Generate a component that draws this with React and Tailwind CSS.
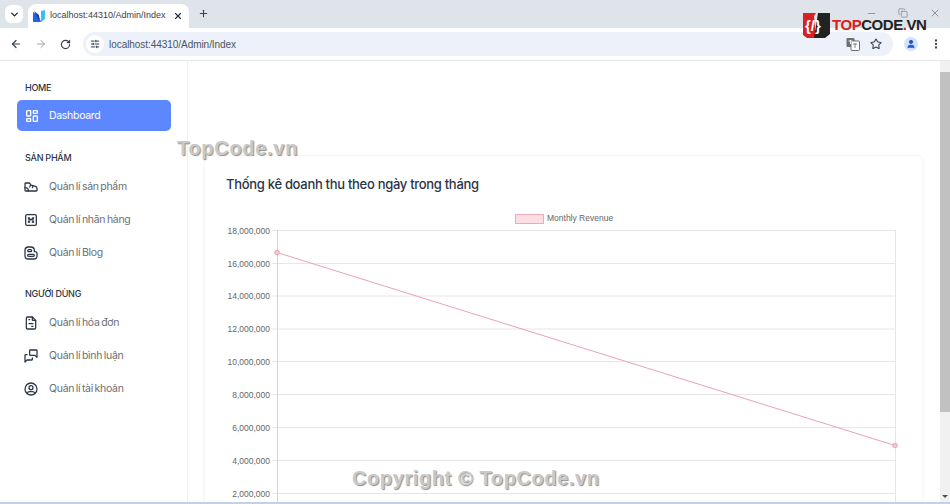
import React from "react";
import { ArrowLeft, ArrowRight, RotateCw, ChevronDown, Plus, X, Star, SlidersHorizontal, User, MoreVertical, Minus, Copy } from "lucide-react";
import { TbLayoutDashboard, TbShoe, TbBrandMedium, TbBrandBlogger, TbFileInvoice, TbMessages, TbUserCircle } from "react-icons/tb";

const jakarta = "font-['Inter','Noto_Sans',sans-serif]";

const SectionTitle = ({ children, className }) => (
  <div className={`pl-[25px] text-[9px] font-medium leading-[14px] tracking-[-0.25px] text-[#2a3547] ${className}`}>{children}</div>
);

const NavItem = ({ icon: Icon, label }) => (
  <div className="flex h-[33px] items-center pl-[23px]">
    <Icon size={16} className="text-[#2a3547]" strokeWidth={1.9} />
    <span className="ml-[10px] text-[10.5px] tracking-[-0.3px] [word-spacing:-1px] text-[#6b7076]">{label}</span>
  </div>
);

const ticks = [
  ["18,000,000", 230.5],
  ["16,000,000", 263.5],
  ["14,000,000", 296],
  ["12,000,000", 329],
  ["10,000,000", 361.5],
  ["8,000,000", 394.5],
  ["6,000,000", 427.5],
  ["4,000,000", 460.5],
  ["2,000,000", 493.5],
];

const Chart = () => (
  <svg width="730" height="300" viewBox="205 204 730 300" className="block">
    <rect x="515.5" y="214.5" width="28" height="9" fill="#fbdde4" stroke="#eeaab8" />
    <text x="547" y="221" fontSize="8.5" fill="#666" fontFamily="Liberation Sans, sans-serif">Monthly Revenue</text>
    {ticks.map(([label, y]) => (
      <g key={label}>
        <line x1="272" x2="895" y1={y} y2={y} stroke="#e6e6e6" />
        <text x="270" y={y + 3} fontSize="8.5" textAnchor="end" fill="#666" fontFamily="Liberation Sans, sans-serif">{label}</text>
      </g>
    ))}
    <line x1="277.5" x2="277.5" y1="230" y2="504" stroke="#d4d4d4" />
    <line x1="895.5" x2="895.5" y1="230" y2="504" stroke="#e6e6e6" />
    <line x1="277" y1="252.5" x2="895" y2="445.5" stroke="#e8a3b2" strokeWidth="1" />
    <circle cx="277" cy="252.5" r="2.3" fill="#fbc4d0" stroke="#e8a3b2" />
    <circle cx="895" cy="445.5" r="2.3" fill="#fbc4d0" stroke="#e8a3b2" />
  </svg>
);

const TranslateIcon = () => (
  <svg width="14" height="14" viewBox="0 0 14 14" className="ml-auto">
    <rect x="0.5" y="1" width="8" height="9" rx="1" fill="#6b7075" />
    <rect x="5" y="4" width="8.5" height="9.5" rx="1" fill="#fff" stroke="#6b7075" />
    <path d="M2.5 4 H6.5 M4.5 3 V7 M7 7 H11 M9 8 V11" stroke="#fff" strokeWidth="0.9" />
    <path d="M7 7 H11 M9 6.5 V11" stroke="#6b7075" strokeWidth="0.9" />
  </svg>
);

const App = () => (
  <div className={`relative flex h-screen w-full flex-col overflow-hidden bg-white ${jakarta}`}>
    {/* tab strip */}
    <div className="flex h-[28px] shrink-0 items-end bg-[#dfe3ea] pl-[5px]">
      <div className="mb-[5px] flex h-[18px] w-[18px] items-center justify-center rounded-[6px] bg-white">
        <ChevronDown size={11} strokeWidth={3} className="text-[#1f2937]" />
      </div>
      <div className="ml-[5px] flex h-[24px] w-[161px] items-center rounded-t-[8px] bg-white pl-[5px]">
        <svg width="12" height="12" viewBox="0 0 12 12">
          <path d="M0 2 L6 6 L8 12 L0 12 Z" fill="#2563eb" />
          <path d="M1 1 L6 5 L6 11 Z" fill="#1e40af" />
          <path d="M8 1 L12 0 L12 9 L8 12 Z" fill="#38bdf8" />
        </svg>
        <span className="ml-[5px] w-[117px] font-['Liberation_Sans',sans-serif] text-[9px] whitespace-nowrap text-[#3c4043]">localhost:44310/Admin/Index</span>
        <X size={10} strokeWidth={2.6} className="ml-[6px] text-[#1f2937]" />
      </div>
      <Plus size={11} strokeWidth={2.4} className="mb-[9px] ml-[9px] text-[#374151]" />
      <div className="ml-auto mb-[9px] flex items-center gap-[21px] pr-[9px] text-[#8b929c]">
        <Minus size={11} />
        <Copy size={10} />
        <X size={12} />
      </div>
    </div>

    {/* toolbar */}
    <div className="flex h-[33px] shrink-0 items-center border-b border-[#e4e6ea] bg-white">
      <ArrowLeft size={12} strokeWidth={2.4} className="ml-[10px] text-[#374151]" />
      <ArrowRight size={12} strokeWidth={2} className="ml-[13px] text-[#9ca3af]" />
      <RotateCw size={11} strokeWidth={2.4} className="ml-[13px] text-[#374151]" />
      <div className="ml-[12px] flex h-[24px] w-[810px] items-center rounded-full bg-[#edf1f9]">
        <div className="ml-[3px] flex h-[18px] w-[18px] items-center justify-center rounded-full bg-white">
          <SlidersHorizontal size={10} strokeWidth={2.4} className="text-[#374151]" />
        </div>
        <span className="ml-[5px] font-['Liberation_Sans',sans-serif] text-[10px] tracking-[-0.05px] text-[#4b5563]">localhost:44310/Admin/Index</span>
        <TranslateIcon />
        <Star size={12} strokeWidth={2.2} className="ml-[10px] mr-[11px] text-[#374151]" />
      </div>
      <div className="ml-[11px] flex h-[14px] w-[14px] items-center justify-center rounded-full bg-[#d3e3fd]">
        <User size={10} fill="#1a56c4" className="text-[#1a56c4]" />
      </div>
      <MoreVertical size={12} strokeWidth={2.6} className="ml-[12px] text-[#374151]" />
    </div>

    {/* page */}
    <div className="flex min-h-0 flex-1">
      <aside className="w-[188px] shrink-0 border-r border-[#eceff3] pt-[20px]">
        <SectionTitle>HOME</SectionTitle>
        <div className="ml-[17px] mt-[5px] flex h-[31px] w-[154px] items-center rounded-[5px] bg-[#5d87ff] pl-[7px] text-white">
          <TbLayoutDashboard size={16} />
          <span className="ml-[9px] text-[10.5px] tracking-[-0.3px]">Dashboard</span>
        </div>
        <SectionTitle className="mt-[20px]">SẢN PHẨM</SectionTitle>
        <div className="mt-[5px]">
          <NavItem icon={TbShoe} label="Quản lí sản phẩm" />
          <NavItem icon={TbBrandMedium} label="Quản lí nhãn hàng" />
          <NavItem icon={TbBrandBlogger} label="Quản lí Blog" />
        </div>
        <SectionTitle className="mt-[18px]">NGƯỜI DÙNG</SectionTitle>
        <div className="mt-[5px]">
          <NavItem icon={TbFileInvoice} label="Quản lí hóa đơn" />
          <NavItem icon={TbMessages} label="Quản lí bình luận" />
          <NavItem icon={TbUserCircle} label="Quản lí tài khoản" />
        </div>
      </aside>

      <main className="min-w-0 flex-1 overflow-hidden pl-[16px] pr-[18px] pt-[94px]">
        <div className="h-[400px] w-[719px] rounded-t-[6px] border border-[#f6f7f9] bg-white shadow-[0_0_4px_rgba(0,0,0,0.03)]">
          <h2 className="pl-[21px] pt-[19px] text-[13px] font-medium leading-[18px] tracking-[-0.3px] text-[#2a3547]">Thống kê doanh thu theo ngày trong tháng</h2>
          <div className="mt-[11px]">
            <Chart />
          </div>
        </div>
      </main>

      {/* scrollbar */}
      <div className="flex w-[10px] shrink-0 flex-col bg-[#f1f1f1]">
        <div className="mt-[11px] h-[340px] bg-[#c1c1c1]" />
        <div className="mt-auto mb-[4px] flex justify-center">
          <div className="h-0 w-0 border-x-[3px] border-t-[3px] border-x-transparent border-t-[#505050]" />
        </div>
      </div>
    </div>
    <div className="h-[2px] shrink-0 bg-[#c3d0e6]" />

    {/* TopCode logo and watermarks */}
    <div className="absolute left-[803px] top-[13px] flex items-center">
      <svg width="27" height="25" viewBox="0 0 27 25">
        <path d="M0 0 H13 L11 3 L13 25 H4 L0 22 Z" fill="#d92121" />
        <path d="M15 0 H27 V21 L22 25 H11 Z" fill="#222" />
        <text x="2" y="18" fontSize="15" fontWeight="700" fill="#fff" fontFamily="Liberation Sans, sans-serif">{"{/}"}</text>
      </svg>
      <span className="ml-[2px] font-['Liberation_Sans',sans-serif] text-[15px] font-bold tracking-[-0.45px] text-[#222]"><span className="text-[#d92121]">TOP</span>CODE<span className="text-[#d92121]">.</span>VN</span>
    </div>
    <div className="absolute left-[177px] top-[133px] font-['Liberation_Sans',sans-serif] text-[20px] font-bold tracking-[0.7px] text-[#c9c9c9] [text-shadow:1px_1px_1px_#8f8f8f]">TopCode.vn</div>
    <div className="absolute left-[352px] top-[463px] font-['Liberation_Sans',sans-serif] text-[20px] font-bold tracking-[0.6px] text-[#c9c9c9] [text-shadow:1px_1px_1px_#8f8f8f]">Copyright © TopCode.vn</div>
  </div>
);

export default App;
